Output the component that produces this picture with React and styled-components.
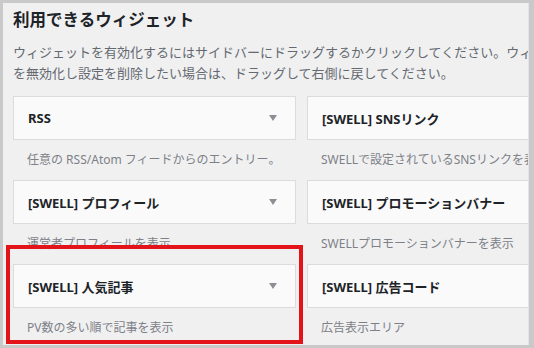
import React from 'react';
import styled, { createGlobalStyle } from 'styled-components';

const widgets = [
  { title: 'RSS', desc: '任意の RSS/Atom フィードからのエントリー。' },
  { title: '[SWELL] SNSリンク', desc: 'SWELLで設定されているSNSリンクを表示' },
  { title: '[SWELL] プロフィール', desc: '運営者プロフィールを表示' },
  { title: '[SWELL] プロモーションバナー', desc: 'SWELLプロモーションバナーを表示' },
  { title: '[SWELL] 人気記事', desc: 'PV数の多い順で記事を表示' },
  { title: '[SWELL] 広告コード', desc: '広告表示エリア' },
];

const App = () => {
  return (
    <>
      <GlobalStyle />
      <Frame>
        <Panel>
          <Title>利用できるウィジェット</Title>
          <Intro>
            ウィジェットを有効化するにはサイドバーにドラッグするかクリックしてください。ウィジェット
            <br />
            を無効化し設定を削除したい場合は、ドラッグして右側に戻してください。
          </Intro>
          <WidgetGrid>
            {widgets.map((w) => (
              <Widget key={w.title}>
                <WidgetTop>
                  <WidgetTitle>{w.title}</WidgetTitle>
                  <Caret />
                </WidgetTop>
                <WidgetDesc>{w.desc}</WidgetDesc>
              </Widget>
            ))}
          </WidgetGrid>
        </Panel>
        <Highlight />
      </Frame>
    </>
  );
};

const GlobalStyle = createGlobalStyle`
  html, body {
    margin: 0;
    padding: 0;
    background: #c9c9c9;
  }
  body {
    font-family: "Noto Sans", "Noto Sans CJK JP", sans-serif;
  }
`;

const Frame = styled.div`
  position: relative;
  width: 534px;
  height: 348px;
  box-sizing: border-box;
  border: 3px solid #c9c9c9;
  border-right-width: 5px;
  background: #f0f0f1;
  overflow: hidden;
`;

const Panel = styled.div`
  padding: 5px 0 0 10px;
  height: 100%;
  box-sizing: border-box;
  overflow: hidden;
  border-right: 1px solid #e4e4e6;
`;

const Title = styled.h2`
  margin: 0;
  font-size: 16.5px;
  line-height: 24px;
  font-weight: 700;
  color: #1d2327;
  white-space: nowrap;
`;

const Intro = styled.p`
  margin: 10px 0 0;
  font-size: 13px;
  line-height: 21px;
  color: #646970;
  white-space: nowrap;
`;

const WidgetGrid = styled.div`
  margin-top: 12px;
  display: grid;
  grid-template-columns: 283px 283px;
  column-gap: 11px;
  width: 577px;
`;

const Widget = styled.div`
  display: flex;
  flex-direction: column;
`;

const WidgetTop = styled.div`
  height: 44px;
  box-sizing: border-box;
  border: 1px solid #dcdcde;
  background: #fafafa;
  display: flex;
  align-items: center;
  justify-content: space-between;
  padding: 0 18px 0 14px;
`;

const WidgetTitle = styled.span`
  font-size: 13px;
  font-weight: 700;
  color: #1d2327;
  white-space: nowrap;
`;

const Caret = styled.span`
  width: 0;
  height: 0;
  border-left: 4px solid transparent;
  border-right: 4px solid transparent;
  border-top: 6px solid #8c8f94;
`;

const WidgetDesc = styled.div`
  height: 40px;
  line-height: 39px;
  padding-left: 14px;
  font-size: 12px;
  color: #7d8187;
  white-space: nowrap;
`;

const Highlight = styled.div`
  position: absolute;
  left: 3px;
  top: 242px;
  width: 297px;
  height: 99px;
  box-sizing: border-box;
  border: 4px solid #e3131a;
  pointer-events: none;
`;

export default App;
